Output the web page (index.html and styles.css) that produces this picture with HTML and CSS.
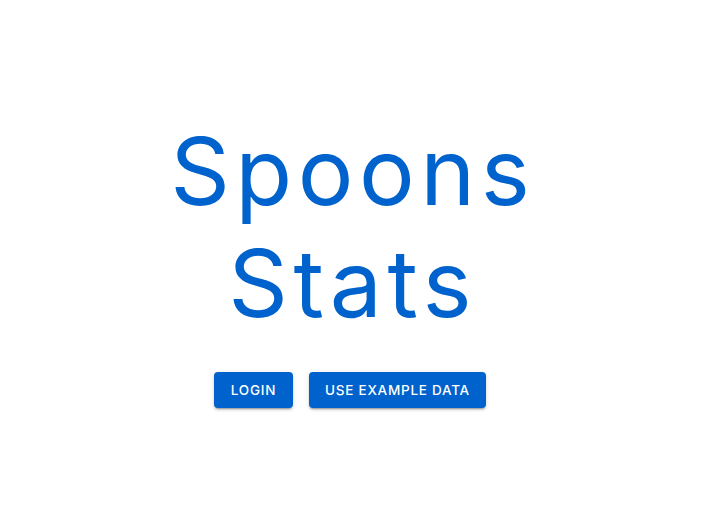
FILE: index.html
```html
<!DOCTYPE html>
<html lang="en">
<head>
<meta charset="utf-8">
<title>Spoons Stats</title>
<link rel="stylesheet" href="styles.css">
</head>
<body>
<main class="page">
  <h1 class="title">Spoons<br>Stats</h1>
  <div class="actions">
    <button class="btn btn-login">Login</button>
    <button class="btn btn-example">Use example data</button>
  </div>
</main>
</body>
</html>
```
FILE: styles.css
```css
html, body {
  margin: 0;
  padding: 0;
  background: #ffffff;
}
.page {
  height: 532px;
  display: flex;
  flex-direction: column;
  align-items: center;
  justify-content: flex-start;
  padding: 115px 17px 0 0;
  box-sizing: border-box;
  font-family: Inter, "Open Sans", sans-serif;
}
.title {
  margin: 0;
  padding-left: 5.5px;
  font-size: 93px;
  font-weight: 400;
  line-height: 112px;
  letter-spacing: 5.5px;
  color: #0062cc;
  text-align: center;
}
.actions {
  display: flex;
  gap: 16px;
  margin-top: 33px;
}
.btn {
  height: 36px;
  padding: 0;
  border: none;
  border-radius: 4px;
  background: #0062cc;
  color: #ffffff;
  font-family: Inter, "Open Sans", sans-serif;
  font-size: 13.5px;
  font-weight: 500;
  text-transform: uppercase;
  letter-spacing: 0.75px;
  box-shadow: 0 3px 1px -2px rgba(0,0,0,0.2), 0 2px 2px 0 rgba(0,0,0,0.14), 0 1px 5px 0 rgba(0,0,0,0.12);
  cursor: pointer;
}
.btn-login { width: 79px; }
.btn-example { width: 177px; }
```
